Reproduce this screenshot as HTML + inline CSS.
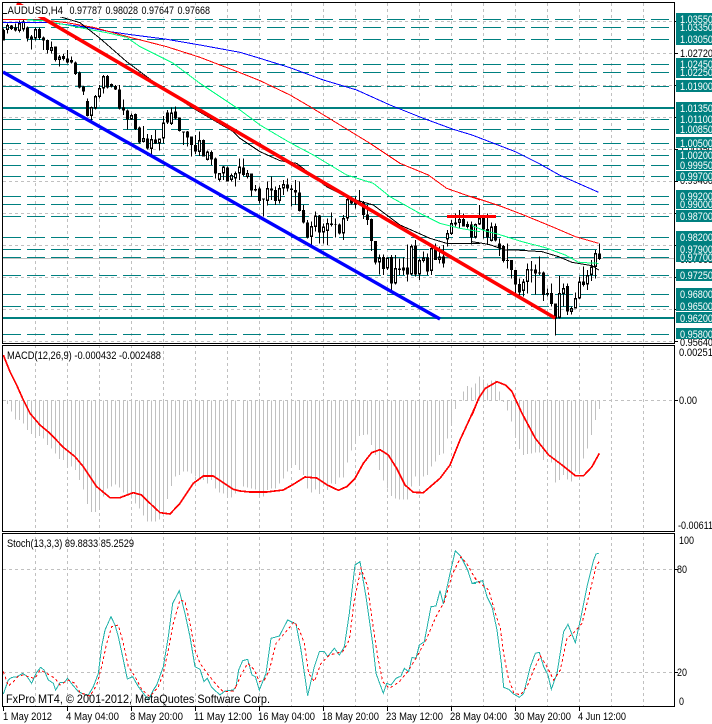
<!DOCTYPE html>
<html><head><meta charset="utf-8"><title>AUDUSD,H4</title>
<style>
html,body{margin:0;padding:0;background:#fff;width:712px;height:724px;overflow:hidden}
svg{display:block;position:absolute;left:0;top:0}
text{font-family:"Liberation Sans",sans-serif;font-size:11px;fill:#000}
.t text{fill:#fff}
.c{shape-rendering:crispEdges;fill:none}
</style></head><body>
<svg width="712" height="724" viewBox="0 0 712 724" xmlns="http://www.w3.org/2000/svg">
<defs>
<path id="w1" d="M22 80V86M58 74V88M70 69V84M106 92V111M154 146V148M178 174V176M274 326V344M286 292V321M298 269V286M310 232V261M394 349V354M430 419V422M454 422V443M478 420V426M490 372V411M514 342V368M598 424V451M622 459V476M658 524V536M670 504V516M694 529V536M706 524V531M718 504V516"/>
<path id="w5" d="M22 -1V1M82 44V74M118 44V73M130 32V36M214 157V181M226 126V151M250 159V168M262 149V163M310 134V171M322 76V126M358 86V86.1M418 252V258M442 252V276M466 284V321M490 282V282.1M514 217V294M538 259V294M550 252V254M574 224V284M598 249V251M622 179V189M634 149V173M658 136V139M682 152V152.1M706 151V183"/>
<path id="w4" d="M22 134V144M58 159V193M154 324V344M166 287V316M262 359V424M274 344V353M298 404V406M310 374V396M322 324V366M346 304V324M358 279V296M370 239V271"/>
</defs>
<rect width="712" height="724" fill="#fff"/>

<!-- grid -->
<g class="c" stroke="#c0c0c0" stroke-width="1" stroke-dasharray="3 3">
<path d="M35.5 3V707M67.5 3V707M99.5 3V707M131.5 3V707M163.5 3V707M195.5 3V707M227.5 3V707M259.5 3V707M291.5 3V707M323.5 3V707M355.5 3V707M387.5 3V707M419.5 3V707M451.5 3V707M483.5 3V707M515.5 3V707M547.5 3V707M579.5 3V707M611.5 3V707M643.5 3V707"/>
<path d="M3 21.5H674M3 53.5H674M3 85.5H674M3 117.5H674M3 149.5H674M3 181.5H674M3 213.5H674M3 245.5H674M3 277.5H674M3 309.5H674M3 341.5H674M3 400.5H674M3 569.5H674M3 672.5H674"/>
</g>

<!-- teal levels -->
<g class="c" stroke="#008080" stroke-width="1" stroke-dasharray="18 6">
<path d="M3 19.5H674M3 27.5H674M3 39.5H674M3 64.5H674M3 72.5H674M3 86.5H674M3 119.5H674M3 129.5H674M3 143.5H674M3 155.5H674M3 165.5H674M3 176.5H674M3 196.5H674M3 204.5H674M3 216.5H674M3 237.5H674M3 249.5H674M3 257.5H674M3 275.5H674M3 294.5H674M3 306.5H674M3 334.5H674"/>
</g>
<g class="c" stroke="#008080" stroke-width="2"><path d="M3 108H674M3 318H674"/></g>
<g class="c" stroke="#c0c0c0" stroke-width="1"><path d="M3 258.5H674"/></g>

<!-- candles -->
<g class="c" transform="translate(.17,0) scale(.33333)">
<path stroke="#000" stroke-width="3" d="M10 85V122M22 70V100M34 75V90M46 70V95M58 62V97M70 60V95M82 80V125M94 105V148M106 82V122M118 82V120M130 110V150M142 118V160M154 125V160M166 140V185M178 165V200M190 162V182M202 150V190M214 170V190M226 185V225M238 215V265M250 258V285M262 295V350M274 320V362M286 285V328M298 255V295M310 225V280M322 225V265M334 250V262M346 255V270M358 255V328M370 298V345M382 328V388M394 340V360M406 340V390M418 380V430M430 378V428M442 402V448M454 405V465M466 390V432M478 415V452M490 348V430M502 330V372M514 322V375M526 320V358M538 352V395M550 395V435M562 393V440M574 410V470M586 405V462M598 395V468M610 418V470M622 452V482M634 452V495M646 472V535M658 520V545M670 498V540M682 500V545M694 520V545M706 515V560M718 475V540"/>
<path stroke="#000" stroke-width="9" d="M10 90V122M34 77V87M46 82V92M82 82V115M94 110V118M118 87V114M130 112V122M142 120V150M166 140V180M190 168V177M202 175V187M214 180V188M226 187V222M238 218V262M250 260V275M262 303V348M322 228V262M334 252V260M346 258V268M358 268V325M370 322V332M382 332V358M406 342V387M418 382V428M442 415V445M466 418V430M502 338V368M526 335V355M538 353V393M550 395V397M562 395V412M574 410V435M586 435V455M610 420V470M634 456V478M646 475V520M682 502V545"/>
<use href="#w1" stroke="#000" stroke-width="9" stroke-linecap="square"/>
<use href="#w1" stroke="#fff" stroke-width="3"/>
</g>
<g class="c" transform="translate(240.17,175) scale(.33333)">
<path stroke="#000" stroke-width="3" d="M10 -50V3M22 -15V10M34 -5V65M46 30V50M58 35V85M70 70V125M82 20V92M94 5V75M106 35V90M118 30V85M130 15V60M142 10V50M154 30V95M166 15V90M178 20V110M190 90V145M202 135V190M214 140V218M226 110V170M238 120V205M250 145V205M262 130V210M274 112V155M286 130V187M298 145V178M310 120V195M322 65V138M334 65V88M346 65V100M358 45V92M370 78V132M382 90V150M394 130V228M406 198V268M418 238V298M430 238V300M442 248V285M454 240V350M466 240V328M478 250V300M490 248V300M502 208V320M514 208V300M526 195V305M538 250V315M550 230V262M562 235V300M574 208V300M586 205V252M598 215V265M610 210V278M622 165V215M634 135V180M646 115V155M658 105V160M670 115V155M682 140V160M694 140V208M706 145V190"/>
<path stroke="#000" stroke-width="9" d="M10 -22V0M34 -5V47M46 42V47M58 40V78M70 70V73M94 40V47M106 45V78M142 28V40M154 40V45M166 45V52M178 52V108M190 105V143M202 142V187M238 122V172M274 145V150M286 148V150M298 148V176M334 72V85M346 76V88M370 83V120M382 118V135M394 132V198M406 198V263M430 246V282M454 246V325M478 280V285M502 278V298M526 212V298M562 248V290M586 220V255M610 245V265M646 142V148M670 132V155M694 148V187"/>
<use href="#w5" stroke="#000" stroke-width="9" stroke-linecap="square"/>
<use href="#w5" stroke="#fff" stroke-width="3"/>
</g>
<g class="c" transform="translate(472.17,175) scale(.33333)">
<path stroke="#000" stroke-width="3" d="M22 90V150M34 120V190M46 115V210M58 142V200M70 145V200M82 190V243M94 210V262M106 205V280M118 255V310M130 285V360M142 310V370M154 312V365M166 265V355M178 258V322M190 268V358M202 245V300M214 290V378M226 340V365M238 325V395M250 385V482M262 303V430M274 325V395M286 325V420M298 395V418M310 352V400M322 305V372M334 275V335M346 285V345M358 255V318M370 225V310M382 205V255"/>
<path stroke="#000" stroke-width="9" d="M34 125V163M46 162V187M70 153V197M82 205V220M94 213V258M106 255V258M118 255V285M130 285V328M142 327V352M178 283V286M190 283V295M202 292V295M214 292V360M226 354V358M238 354V387M250 385V430M286 333V410M334 320V330M382 235V252"/>
<use href="#w4" stroke="#000" stroke-width="9" stroke-linecap="square"/>
<use href="#w4" stroke="#fff" stroke-width="3"/>
</g>

<!-- moving averages -->
<g class="c" stroke-width="3" transform="scale(.33333)">
<polyline stroke="#0000ff" points="8,68 150,68 250,80 330,95 400,105 495,117 600,135 720,157"/>
<polyline stroke="#ff0000" points="8,58 130,60 200,68 280,82 390,112 500,140 600,172 720,218"/>
<polyline stroke="#00ff7f" points="80,60 130,62 200,75 250,85 320,98 380,112 420,140 520,190 600,250 720,330"/>
<polyline stroke="#000" points="180,50 240,68 300,115 380,185 480,260 580,325 700,395 720,415"/>
</g>
<g class="c" stroke-width="3" transform="translate(240,0) scale(.33333)">
<polyline stroke="#0000ff" points="0,157 60,175 150,203 250,240 350,270 450,315 550,355 640,388 696,405"/>
<polyline stroke="#ff0000" points="0,218 60,242 150,285 210,320 300,375 390,430 480,490 565,525 620,565 720,600"/>
<polyline stroke="#00ff7f" points="0,330 60,375 150,428 220,465 320,525 400,550 450,590 530,635 600,670 660,685 720,695"/>
<polyline stroke="#000" points="0,415 60,455 120,482 170,490 260,560 330,595 400,615 480,675 570,715 620,730 720,730"/>
</g>
<g class="c" stroke-width="3" transform="translate(472,0) scale(.33333)">
<polyline stroke="#0000ff" points="0,405 60,428 130,455 200,490 262,525 330,555 380,577"/>
<polyline stroke="#ff0000" points="0,590 90,620 160,647 240,680 310,710 380,730"/>
<polyline stroke="#00ff7f" points="0,677 40,693 80,703 150,725 220,743 280,765 320,787 380,790"/>
<polyline stroke="#000" points="0,725 50,733 100,750 130,750 210,755 260,770 300,787 360,797 380,810"/>
</g>

<!-- trend lines -->
<g fill="none">
<path d="M17 3L555 318" stroke="#ff0000" stroke-width="3.6"/>
<path d="M3 72L440 319" stroke="#0000ff" stroke-width="3.4"/>
<path d="M447 216.5H496" stroke="#ff0000" stroke-width="3" class="c"/>
</g>

<!-- chart label -->
<rect x="7" y="5" width="204" height="12" fill="#fff"/>
<rect x="3" y="13" width="4" height="1" fill="#000"/>
<text x="7.5" y="14" textLength="55.5" lengthAdjust="spacingAndGlyphs">AUDUSD,H4</text>
<text x="69.5" y="14" textLength="32.5" lengthAdjust="spacingAndGlyphs">0.97787</text>
<text x="105.5" y="14" textLength="32.5" lengthAdjust="spacingAndGlyphs">0.98028</text>
<text x="141.5" y="14" textLength="32.5" lengthAdjust="spacingAndGlyphs">0.97647</text>
<text x="177.5" y="14" textLength="32.5" lengthAdjust="spacingAndGlyphs">0.97668</text>

<!-- MACD histogram -->
<g class="c" stroke="#c0c0c0" stroke-width="3" transform="translate(.17,340) scale(.33333)">
<path d="M22 181V192M34 181V215M46 181V238M58 181V240M70 181V250M82 181V270M94 181V282M106 181V285M118 181V288M130 181V295M142 181V315M154 181V325M166 181V340M178 181V357M190 181V360M202 181V380M214 181V380M226 181V390M238 181V420M250 181V448M262 181V492M274 181V516M286 181V516M298 181V510M310 181V470M322 181V445M334 181V440M346 181V433M358 181V443M370 181V458M382 181V463M394 181V475M406 181V490M418 181V505M430 181V527M442 181V545M454 181V545M466 181V545M478 181V538M490 181V530M502 181V477M514 181V438M526 181V410M538 181V405M550 181V395M562 181V395M574 181V400M586 181V410M598 181V415M610 181V420M622 181V430M634 181V420M646 181V445M658 181V458M670 181V460M682 181V465M694 181V473M706 181V460"/>
</g>
<g class="c" stroke="#c0c0c0" stroke-width="3" transform="translate(240.17,340) scale(.33333)">
<path d="M10 181V440M22 181V442M34 181V445M46 181V448M58 181V465M70 181V470M82 181V450M94 181V445M106 181V445M118 181V430M130 181V415M142 181V395M154 181V380M166 181V375M178 181V390M190 181V405M202 181V445M214 181V458M226 181V448M238 181V462M250 181V440M262 181V450M274 181V430M286 181V432M298 181V412M310 181V412M322 181V368M334 181V332M346 181V305M358 181V288M370 181V285M382 181V283M394 181V315M406 181V345M418 181V390M430 181V422M442 181V445M454 181V468M466 181V475M478 181V478M490 181V478M502 181V478M514 181V440M526 181V410M538 181V435M550 181V410M562 181V405M574 181V380M586 181V365M598 181V345M610 181V340M622 181V295M634 181V250M646 181V207M658 181V182M670 181V155M682 181V138M694 181V142M706 181V130M718 181V110"/>
</g>
<g class="c" stroke="#c0c0c0" stroke-width="3" transform="translate(472.17,340) scale(.33333)">
<path d="M34 181V118M46 181V130M58 181V122M70 181V122M82 181V155M94 181V186M106 181V212M118 181V245M130 181V290M142 181V327M154 181V345M166 181V342M178 181V340M190 181V338M202 181V338M214 181V360M226 181V350M238 181V368M250 181V428M262 181V420M274 181V405M286 181V418M298 181V425M310 181V395M322 181V400M334 181V355M346 181V325M358 181V285M370 181V240M382 181V207"/>
</g>

<!-- MACD signal -->
<g class="c" stroke="#ff0000" stroke-width="5">
<polyline transform="translate(0,340) scale(.33333)" points="10,45 30,95 50,135 70,180 90,220 120,255 150,280 190,322 225,350 250,380 290,440 330,473 360,473 400,458 425,465 450,490 480,518 510,522 540,490 580,430 610,408 640,408 670,428 700,448 720,453"/>
<polyline transform="translate(240,340) scale(.33333)" points="0,453 30,456 80,456 130,450 160,433 195,411 230,414 260,434 295,451 320,440 345,415 370,370 395,338 420,329 445,345 470,385 495,435 520,457 550,458 600,415 630,375 660,300 690,235 708,195"/>
<polyline transform="translate(472,340) scale(.33333)" points="0,225 20,175 40,145 75,125 100,135 120,155 150,220 190,295 230,345 270,375 310,407 335,407 360,380 382,340"/>
</g>

<!-- Stochastic -->
<g class="c" stroke="#20b2aa" stroke-width="3">
<polyline transform="translate(0,530) scale(.33333)" points="10,492 25,450 35,442 50,441 68,430 80,438 95,460 108,430 122,412 132,420 145,450 160,460 167,480 180,458 192,458 203,445 218,465 235,485 250,492 265,495 280,470 295,430 305,350 315,300 333,260 345,285 355,320 368,380 382,447 398,440 415,470 430,490 445,510 460,480 470,465 490,410 505,320 518,220 538,182 555,250 570,320 585,410 600,418 612,455 622,445 635,472 660,495 675,483 700,480 708,470"/>
<polyline transform="translate(236,530) scale(.33333)" points="0,470 8,420 20,392 35,388 48,435 58,440 70,480 90,430 105,325 130,318 155,270 180,282 195,360 215,497 235,410 250,365 265,365 275,380 295,355 310,375 325,350 340,250 357,105 372,95 390,200 410,340 420,430 442,490 452,460 465,465 480,445 495,438 505,415 518,425 528,382 540,385 550,345 565,335 585,230 600,228 612,182 622,222 640,140 658,62 675,80 695,120 708,160 720,160"/>
<polyline transform="translate(472,530) scale(.33333)" points="0,160 32,152 45,200 60,230 75,300 88,400 95,472 110,478 125,492 142,502 155,490 175,410 190,370 202,367 215,410 228,435 238,478 255,430 275,305 288,283 310,338 325,270 345,170 365,90 372,72 380,70"/>
</g>
<g class="c" stroke="#ff0000" stroke-width="3" stroke-dasharray="8 8">
<polyline transform="translate(0,530) scale(.33333)" points="10,425 25,468 40,455 55,438 70,435 90,442 105,445 120,420 140,430 165,445 180,465 205,450 225,460 240,488 270,498 290,465 305,410 320,340 335,290 355,285 370,340 385,410 405,440 425,478 450,500 475,470 490,430 505,360 520,280 540,210 555,215 570,280 585,360 600,400 625,435 650,465 670,485 700,483 708,470"/>
<polyline transform="translate(236,530) scale(.33333)" points="0,470 15,435 35,400 55,420 70,455 85,450 100,420 120,340 150,305 175,275 190,300 205,340 218,430 235,455 255,400 280,375 320,365 340,330 355,210 375,115 395,170 410,280 425,380 440,455 460,475 490,455 515,425 540,385 570,330 600,260 625,215 650,130 675,80 695,105 720,150"/>
<polyline transform="translate(472,530) scale(.33333)" points="8,142 25,160 50,180 70,250 85,295 95,370 108,440 125,488 145,495 165,470 185,420 205,378 225,410 245,450 265,420 285,325 305,308 330,280 355,180 372,110 383,92"/>
</g>

<!-- pane labels -->
<text x="7" y="359" textLength="154" lengthAdjust="spacingAndGlyphs">MACD(12,26,9) -0.000432 -0.002488</text>
<text x="7" y="547" textLength="127" lengthAdjust="spacingAndGlyphs">Stoch(13,3,3) 89.8833 85.2529</text>
<text x="6" y="703" textLength="264" lengthAdjust="spacingAndGlyphs" style="font-size:12px">FxPro MT4, © 2001-2012, MetaQuotes Software Corp.</text>

<!-- frames -->
<g fill="none" stroke="#000" stroke-width="1" class="c">
<rect x="2.5" y="2.5" width="672" height="341"/>
<rect x="2.5" y="345.5" width="672" height="186"/>
<rect x="2.5" y="533.5" width="672" height="173"/>
<path d="M675 21.5h3M675 53.5h3M675 85.5h3M675 117.5h3M675 149.5h3M675 181.5h3M675 213.5h3M675 245.5h3M675 277.5h3M675 309.5h3M675 341.5h3M675 400.5h3M675 569.5h3M675 672.5h3"/>
<path d="M3.5 707v4M67.5 707v4M131.5 707v4M195.5 707v4M259.5 707v4M323.5 707v4M387.5 707v4M451.5 707v4M515.5 707v4M579.5 707v4"/>
</g>

<!-- right axis plain labels -->
<text x="680" y="57" textLength="33" lengthAdjust="spacingAndGlyphs">1.02720</text>
<text x="680" y="153" textLength="33" lengthAdjust="spacingAndGlyphs">1.00350</text>
<text x="680" y="184" textLength="33" lengthAdjust="spacingAndGlyphs">0.99400</text>
<text x="680" y="263" textLength="33" lengthAdjust="spacingAndGlyphs">0.97668</text>
<text x="680" y="346" textLength="33" lengthAdjust="spacingAndGlyphs">0.95640</text>
<text x="679" y="356" textLength="34" lengthAdjust="spacingAndGlyphs">0.00251</text>
<text x="679" y="404" textLength="18" lengthAdjust="spacingAndGlyphs">0.00</text>
<text x="678" y="529" textLength="35" lengthAdjust="spacingAndGlyphs">-0.00611</text>
<text x="679" y="544" textLength="15" lengthAdjust="spacingAndGlyphs">100</text>
<text x="677" y="573" textLength="10" lengthAdjust="spacingAndGlyphs">80</text>
<text x="677" y="676" textLength="10" lengthAdjust="spacingAndGlyphs">20</text>
<text x="679" y="705" textLength="5" lengthAdjust="spacingAndGlyphs">0</text>

<!-- teal boxes -->
<g fill="#008080" class="c">
<path style="fill:#008080;stroke:none" d="M676 13h36v12h-36zM676 21h36v12h-36zM676 33h36v12h-36zM676 58h36v12h-36zM676 66h36v12h-36zM676 80h36v12h-36zM676 102h36v12h-36zM676 114h36v11h-36zM676 123h36v11h-36zM676 137h36v11h-36zM676 150h36v11h-36zM676 159h36v11h-36zM676 171h36v10h-36zM676 190h36v11h-36zM676 198h36v11h-36zM676 210h36v12h-36zM676 231h36v12h-36zM676 243h36v11h-36zM676 251h36v11h-36zM676 269h36v12h-36zM676 288h36v12h-36zM676 300h36v11h-36zM676 312h36v11h-36zM676 328h36v11h-36z"/>
</g>
<g class="t">
<text x="680" y="23" textLength="33" lengthAdjust="spacingAndGlyphs">1.03550</text>
<text x="680" y="31" textLength="33" lengthAdjust="spacingAndGlyphs">1.03350</text>
<text x="680" y="43" textLength="33" lengthAdjust="spacingAndGlyphs">1.03050</text>
<text x="680" y="68" textLength="33" lengthAdjust="spacingAndGlyphs">1.02450</text>
<text x="680" y="76" textLength="33" lengthAdjust="spacingAndGlyphs">1.02250</text>
<text x="680" y="90" textLength="33" lengthAdjust="spacingAndGlyphs">1.01900</text>
<text x="680" y="112" textLength="33" lengthAdjust="spacingAndGlyphs">1.01350</text>
<text x="680" y="123" textLength="33" lengthAdjust="spacingAndGlyphs">1.01100</text>
<text x="680" y="133" textLength="33" lengthAdjust="spacingAndGlyphs">1.00850</text>
<text x="680" y="147" textLength="33" lengthAdjust="spacingAndGlyphs">1.00500</text>
<text x="680" y="159" textLength="33" lengthAdjust="spacingAndGlyphs">1.00200</text>
<text x="680" y="169" textLength="33" lengthAdjust="spacingAndGlyphs">0.99950</text>
<text x="680" y="180" textLength="33" lengthAdjust="spacingAndGlyphs">0.99700</text>
<text x="680" y="200" textLength="33" lengthAdjust="spacingAndGlyphs">0.99200</text>
<text x="680" y="208" textLength="33" lengthAdjust="spacingAndGlyphs">0.99000</text>
<text x="680" y="220" textLength="33" lengthAdjust="spacingAndGlyphs">0.98700</text>
<text x="680" y="241" textLength="33" lengthAdjust="spacingAndGlyphs">0.98200</text>
<text x="680" y="253" textLength="33" lengthAdjust="spacingAndGlyphs">0.97900</text>
<text x="680" y="261" textLength="33" lengthAdjust="spacingAndGlyphs">0.97700</text>
<text x="680" y="279" textLength="33" lengthAdjust="spacingAndGlyphs">0.97250</text>
<text x="680" y="298" textLength="33" lengthAdjust="spacingAndGlyphs">0.96800</text>
<text x="680" y="310" textLength="33" lengthAdjust="spacingAndGlyphs">0.96500</text>
<text x="680" y="322" textLength="33" lengthAdjust="spacingAndGlyphs">0.96200</text>
<text x="680" y="338" textLength="33" lengthAdjust="spacingAndGlyphs">0.95800</text>
</g>

<!-- time axis -->
<text x="3" y="720" textLength="49" lengthAdjust="spacingAndGlyphs">1 May 2012</text>
<text x="66" y="720" textLength="53" lengthAdjust="spacingAndGlyphs">4 May 04:00</text>
<text x="130" y="720" textLength="53" lengthAdjust="spacingAndGlyphs">8 May 20:00</text>
<text x="194" y="720" textLength="58" lengthAdjust="spacingAndGlyphs">11 May 12:00</text>
<text x="258" y="720" textLength="57" lengthAdjust="spacingAndGlyphs">16 May 04:00</text>
<text x="322" y="720" textLength="57" lengthAdjust="spacingAndGlyphs">18 May 20:00</text>
<text x="386" y="720" textLength="57" lengthAdjust="spacingAndGlyphs">23 May 12:00</text>
<text x="450" y="720" textLength="57" lengthAdjust="spacingAndGlyphs">28 May 04:00</text>
<text x="514" y="720" textLength="57" lengthAdjust="spacingAndGlyphs">30 May 20:00</text>
<text x="578" y="720" textLength="48" lengthAdjust="spacingAndGlyphs">4 Jun 12:00</text>
</svg>
</body></html>
